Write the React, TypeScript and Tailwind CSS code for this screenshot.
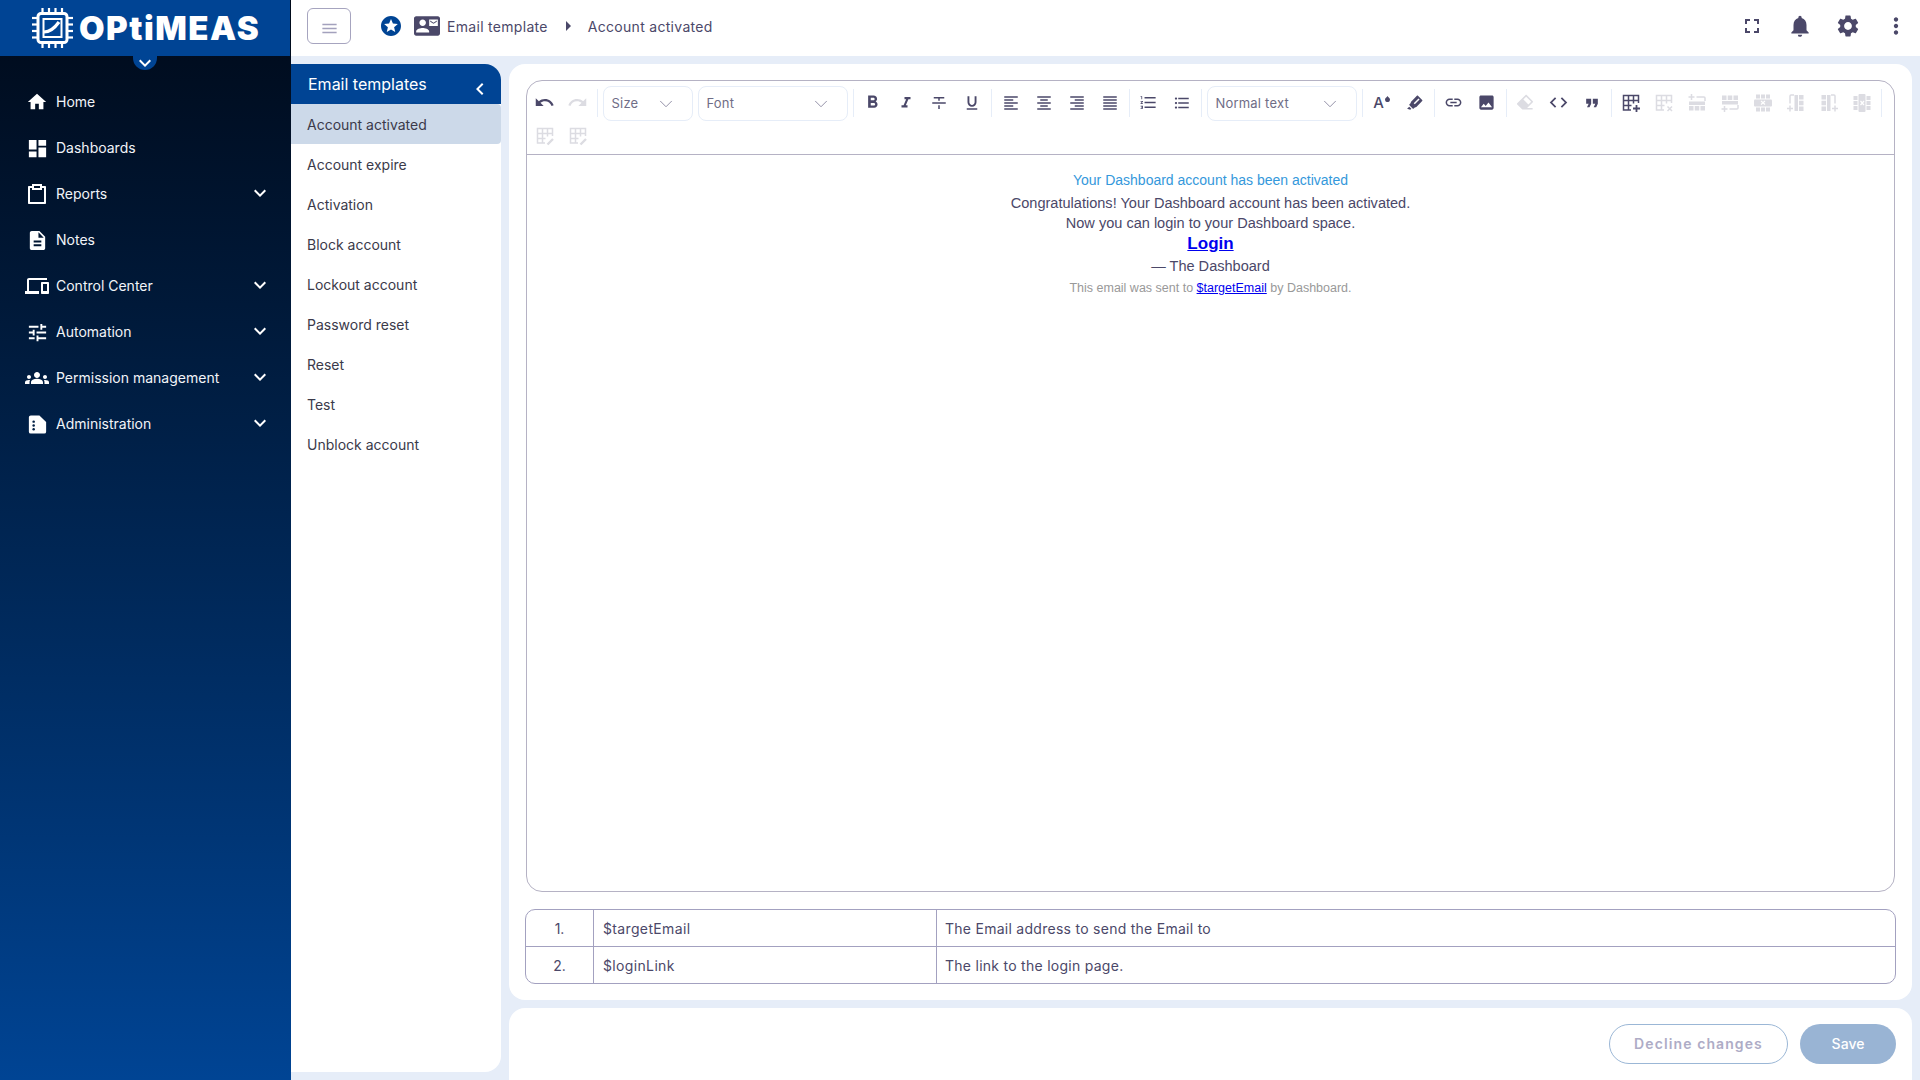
import {
  MdHome,
  MdDashboard,
  MdDescription,
  MdDevices,
  MdTune,
  MdGroups,
  MdExpandMore,
  MdChevronLeft,
  MdMenu,
  MdStars,
  MdContactMail,
  MdArrowRight,
  MdFullscreen,
  MdNotifications,
  MdSettings,
  MdMoreVert,
  MdUndo,
  MdRedo,
  MdFormatBold,
  MdFormatItalic,
  MdFormatUnderlined,
  MdFormatAlignLeft,
  MdFormatAlignCenter,
  MdFormatAlignRight,
  MdFormatAlignJustify,
  MdFormatListNumbered,
  MdFormatListBulleted,
  MdLink,
  MdImage,
  MdCode,
  MdFormatQuote,
} from "react-icons/md";
import { RiStrikethrough2, RiMarkPenFill, RiEraserFill, RiClipboardLine } from "react-icons/ri";
import { LuChevronDown } from "react-icons/lu";

function AdminIcon({ size }: { size: number }) {
  return (
    <svg width={size} height={size} viewBox="0 0 24 24">
      <path
        d="M5 2.5h9l7 7V19.5a2 2 0 0 1-2 2H5a2 2 0 0 1-2-2V4.500a2 2 0 0 1 2-2z"
        fill="white"
      />
      <circle cx="8" cy="9" r="1.300" fill="#001f45" />
      <circle cx="8" cy="13" r="1.300" fill="#001f45" />
      <circle cx="8" cy="17" r="1.300" fill="#001f45" />
    </svg>
  );
}

const navItems = [
  { label: "Home", icon: <MdHome size={22} /> },
  { label: "Dashboards", icon: <MdDashboard size={23} /> },
  { label: "Reports", icon: <RiClipboardLine size={24} />, sub: true },
  { label: "Notes", icon: <MdDescription size={23} /> },
  { label: "Control Center", icon: <MdDevices size={24} />, sub: true },
  { label: "Automation", icon: <MdTune size={23} />, sub: true },
  { label: "Permission management", icon: <MdGroups size={24} />, sub: true },
  { label: "Administration", icon: <AdminIcon size={23} />, sub: true },
];

const templates = [
  "Account activated",
  "Account expire",
  "Activation",
  "Block account",
  "Lockout account",
  "Password reset",
  "Reset",
  "Test",
  "Unblock account",
];

function ChipLogo() {
  const pins = [10, 16.5, 23, 29.5];
  return (
    <svg width="41" height="40" viewBox="0 0 41 40" fill="none" stroke="white">
      {pins.map((p) => (
        <g key={p} strokeWidth="2.200">
          <path d={`M${p + 0.5} 0v7`} />
          <path d={`M${p + 0.5} 33v7`} />
          <path d={`M0 ${p}h7`} />
          <path d={`M34 ${p}h7`} />
        </g>
      ))}
      <rect x="6" y="5.500" width="29" height="29" rx="3" strokeWidth="3" />
      <rect x="11.500" y="11" width="18" height="18" strokeWidth="2" />
      <path d="M12 24c6 0 10-3 15-10" strokeWidth="3.200" />
    </svg>
  );
}

function Sidebar() {
  return (
    <aside className="relative flex h-full w-[291px] shrink-0 flex-col bg-linear-to-b from-[#000a1a] to-[#004494]">
      <div className="flex h-14 w-[290px] shrink-0 items-center gap-[6px] bg-[#004494] pl-8">
        <ChipLogo />
        <span className="text-[33px] leading-none font-black tracking-[1.5px] text-white">OPtiMEAS</span>
      </div>
      <div className="absolute top-14 left-[133px] flex h-[14px] w-6 items-center justify-center rounded-b-full bg-[#004494] text-white">
        <MdExpandMore size={24} />
      </div>
      <nav className="pt-[23px]">
        {navItems.map((item) => (
          <div key={item.label} className="flex h-[46px] items-center text-white">
            <div className="flex w-[56px] shrink-0 justify-center pl-[18px]">
              <span className="flex w-[38px] justify-center">{item.icon}</span>
            </div>
            <span className="flex-1 text-sm text-[#f2f4f8]">{item.label}</span>
            {item.sub && (
              <span className="mr-[19px] -mt-[2px]">
                <MdExpandMore size={24} />
              </span>
            )}
          </div>
        ))}
      </nav>
    </aside>
  );
}

function Header() {
  return (
    <header className="flex h-14 shrink-0 items-center bg-white pb-1 pl-4 text-[#4b4869]">
      <button className="flex h-9 w-11 items-center justify-center rounded-md border border-[#a6a4bf] pt-1 text-[#a3a1bd]">
        <MdMenu size={19} />
      </button>
      <MdStars size={24} className="ml-7 text-[#004494]" />
      <MdContactMail size={26} className="ml-[11px]" />
      <span className="mt-[2px] ml-[7px] text-sm tracking-[0.3px]">Email template</span>
      <MdArrowRight size={24} className="ml-[8px]" />
      <span className="mt-[2px] ml-[8px] text-sm tracking-[0.3px]">Account activated</span>
      <div className="ml-auto flex items-center">
        <span className="flex w-12 justify-center"><MdFullscreen size={24} /></span>
        <span className="flex w-12 justify-center"><MdNotifications size={26} /></span>
        <span className="flex w-12 justify-center"><MdSettings size={26} /></span>
        <span className="flex w-12 justify-center"><MdMoreVert size={26} /></span>
      </div>
    </header>
  );
}

function TemplateList() {
  return (
    <section className="flex h-full w-[210px] shrink-0 flex-col overflow-hidden rounded-tr-[16px] rounded-br-[16px] bg-white">
      <div className="relative flex h-10 shrink-0 items-center bg-[#004494] pl-[17px] text-base text-white">
        Email templates
        <MdChevronLeft size={24} className="absolute top-[13px] right-[9px]" />
      </div>
      {templates.map((name, i) => (
        <div
          key={name}
          className={
            i === 0
              ? "flex h-10 items-center rounded-r-[4px] bg-[#ccd9e9] pt-[2px] pl-4 text-sm text-[#3b3a4a]"
              : "flex h-10 items-center pt-[2px] pl-4 text-sm text-[#3b3a4a]"
          }
        >
          {name}
        </div>
      ))}
    </section>
  );
}

function TableIcon({ mark }: { mark: "add" | "del" | "edit" }) {
  return (
    <svg width="20" height="20" viewBox="0 0 20 20" fill="none" stroke="currentColor" strokeWidth="1.500">
      <path d="M10 17H2.500V2.500h15V10M2.500 7.500h15M2.500 12.500h8M7.500 2.500v14.500M12.500 2.500v8" />
      {mark === "add" && <path d="M15.500 12v7M12 15.500h7" strokeWidth="1.800" />}
      {mark === "del" && <path d="M13.500 13.500l4.500 4.500M18 13.500l-4.500 4.500" />}
      {mark === "edit" && <path d="M12.500 18.500l5.500-5.500" strokeWidth="2.400" />}
    </svg>
  );
}

// insert row/column: plus with a bracket next to a solid band of cells
function TableInsert({ transform }: { transform?: string }) {
  return (
    <svg width="20" height="20" viewBox="0 0 20 20" fill="currentColor">
      <g transform={transform}>
        <path d="M4.500 1v6M1.500 4h6M9.500 4h7.500a1 1 0 0 1 1 1v3" fill="none" stroke="currentColor" strokeWidth="1.500" />
        <rect x="2" y="8.500" width="16" height="3.500" />
        <rect x="2" y="13" width="4.500" height="4.500" />
        <rect x="7.750" y="13" width="4.500" height="4.500" />
        <rect x="13.500" y="13" width="4.500" height="4.500" />
      </g>
    </svg>
  );
}

// delete row/column: rows of cells with a cross through the middle one
function TableDelete({ transform }: { transform?: string }) {
  return (
    <svg width="20" height="20" viewBox="0 0 20 20" fill="currentColor">
      <g transform={transform}>
        <rect x="3" y="1.500" width="4" height="4" />
        <rect x="8" y="1.500" width="4" height="4" />
        <rect x="13" y="1.500" width="4" height="4" />
        <rect x="1" y="6.500" width="18" height="7" rx="1" />
        <path d="M8 8l4 3.500M12 8l-4 3.500" stroke="white" strokeWidth="1.200" />
        <rect x="3" y="14.500" width="4" height="4" />
        <rect x="8" y="14.500" width="4" height="4" />
        <rect x="13" y="14.500" width="4" height="4" />
      </g>
    </svg>
  );
}

function Tool({ children, off }: { children: React.ReactNode; off?: boolean }) {
  return (
    <span
      className={
        off
          ? "flex h-[33px] w-[33px] items-center justify-center text-[#dcdce2]"
          : "flex h-[33px] w-[33px] items-center justify-center text-[#4b4869]"
      }
    >
      {children}
    </span>
  );
}

function Divider() {
  return (
    <span className="flex h-[33px] w-[6px] items-center justify-center">
      <span className="h-7 w-px bg-[#e6edf8]" />
    </span>
  );
}

function Select({ label, width }: { label: string; width: string }) {
  return (
    <span
      className={`mx-[2.5px] -mb-[2px] flex h-[35px] items-center justify-between rounded-lg border border-[#e6edf8] pr-[15px] pl-2 text-[13px] tracking-[0.2px] text-[#6f6d86] ${width}`}
    >
      {label}
      <LuChevronDown size={22} strokeWidth={1} className="text-[#8a88a0]" />
    </span>
  );
}

function Toolbar() {
  return (
    <div className="flex h-[74px] shrink-0 flex-wrap content-start items-start border-b border-[#b5b2c4] pt-[5px] pl-px">
      <Tool><MdUndo size={21} /></Tool>
      <Tool off><MdRedo size={21} /></Tool>
      <Divider />
      <Select label="Size" width="w-[90px]" />
      <Select label="Font" width="w-[150px]" />
      <Divider />
      <Tool><MdFormatBold size={21} /></Tool>
      <Tool><MdFormatItalic size={18} /></Tool>
      <Tool><RiStrikethrough2 size={18} /></Tool>
      <Tool><MdFormatUnderlined size={18} /></Tool>
      <Divider />
      <Tool><MdFormatAlignLeft size={18} /></Tool>
      <Tool><MdFormatAlignCenter size={18} /></Tool>
      <Tool><MdFormatAlignRight size={18} /></Tool>
      <Tool><MdFormatAlignJustify size={18} /></Tool>
      <Divider />
      <Tool><MdFormatListNumbered size={19} /></Tool>
      <Tool><MdFormatListBulleted size={18} /></Tool>
      <Divider />
      <Select label="Normal text" width="w-[150px]" />
      <Divider />
      <Tool>
        <span className="flex items-start text-[15px] leading-none font-medium">
          A
          <svg width="5" height="6" viewBox="0 0 6 7" className="mt-[1px] ml-[1px]">
            <path d="M3 0c1 1.500 3 2.700 3 4.200a3 3 0 0 1-6 0C0 2.700 2 1.500 3 0z" fill="currentColor" />
          </svg>
        </span>
      </Tool>
      <Tool><RiMarkPenFill size={18} /></Tool>
      <Divider />
      <Tool><MdLink size={19} /></Tool>
      <Tool><MdImage size={19} /></Tool>
      <Divider />
      <Tool off><RiEraserFill size={19} /></Tool>
      <Tool><MdCode size={21} /></Tool>
      <Tool><MdFormatQuote size={20} /></Tool>
      <Divider />
      <Tool><TableIcon mark="add" /></Tool>
      <Tool off><TableIcon mark="del" /></Tool>
      <Tool off><TableInsert /></Tool>
      <Tool off><TableInsert transform="matrix(1 0 0 -1 0 20)" /></Tool>
      <Tool off><TableDelete /></Tool>
      <Tool off><TableInsert transform="rotate(-90 10 10)" /></Tool>
      <Tool off><TableInsert transform="rotate(-90 10 10) matrix(1 0 0 -1 0 20)" /></Tool>
      <Tool off><TableDelete transform="rotate(90 10 10)" /></Tool>
      <Divider />
      <Tool off><TableIcon mark="edit" /></Tool>
      <Tool off><TableIcon mark="edit" /></Tool>
    </div>
  );
}

function Editor() {
  return (
    <div className="mx-px flex min-h-0 flex-1 flex-col rounded-2xl border border-[#b5b2c4]">
      <Toolbar />
      <div className="flex-1 pt-[15px] text-center font-['Liberation_Sans',Arial,sans-serif] text-[14.55px] leading-5 text-[#4b4869]">
        <p className="text-sm text-[#3498db]">Your Dashboard account has been activated</p>
        <p className="mt-[3px]">Congratulations! Your Dashboard account has been activated.</p>
        <p>Now you can login to your Dashboard space.</p>
        <p className="text-[17px] leading-[22px] font-bold">
          <a className="text-[#0000ee] underline">Login</a>
        </p>
        <p className="mt-px">— The Dashboard</p>
        <p className="mt-[2px] text-[12.5px] text-[#999999]">
          This email was sent to <a className="text-[#0000ee] underline">$targetEmail</a> by Dashboard.
        </p>
      </div>
    </div>
  );
}

function VariableRow({ n, name, text, last }: { n: string; name: string; text: string; last?: boolean }) {
  return (
    <div className={last ? "flex h-[36px]" : "flex h-[37px] border-b border-[#a3a1c0]"}>
      <div className="flex w-[68px] items-center justify-center border-r border-[#a3a1c0] pt-[2px]">{n}</div>
      <div className="flex w-[343px] items-center border-r border-[#a3a1c0] pt-[2px] pl-[9px] tracking-[0.35px]">
        {name}
      </div>
      <div className="flex flex-1 items-center pt-[2px] pl-2 tracking-[0.27px]">{text}</div>
    </div>
  );
}

export default function App() {
  return (
    <div className="flex h-screen w-full overflow-hidden bg-[#e6edf8] font-['Inter',sans-serif]">
      <Sidebar />
      <div className="flex min-w-0 flex-1 flex-col">
        <Header />
        <div className="flex min-h-0 flex-1 gap-2 pt-2">
          <div className="h-full pb-2">
            <TemplateList />
          </div>
          <div className="flex min-w-0 flex-1 flex-col gap-2 pr-2">
            <main className="flex min-h-0 flex-1 flex-col gap-[17px] rounded-2xl bg-white p-4">
              <Editor />
              <div className="shrink-0 rounded-[10px] border border-[#a3a1c0] text-sm text-[#4b4869]">
                <VariableRow n="1." name="$targetEmail" text="The Email address to send the Email to" />
                <VariableRow n="2." name="$loginLink" text="The link to the login page." last />
              </div>
            </main>
            <footer className="flex h-[72px] shrink-0 items-start justify-end gap-3 rounded-t-2xl bg-white pt-4 pr-4">
              <button className="h-10 w-[179px] rounded-full border border-[#9bb7d6] text-sm font-semibold tracking-[1.1px] text-[#aeacc6]">
                Decline changes
              </button>
              <button className="h-10 w-24 rounded-full bg-[#99b4d4] text-sm font-medium text-white">Save</button>
            </footer>
          </div>
        </div>
      </div>
    </div>
  );
}
